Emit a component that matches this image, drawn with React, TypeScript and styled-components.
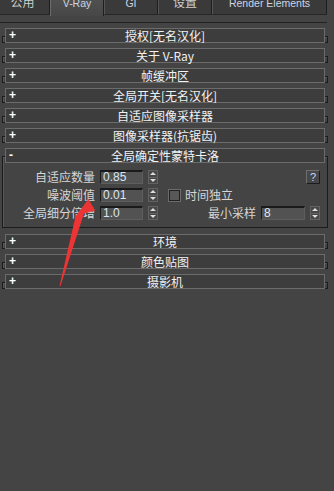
import React from 'react'
import styled, { createGlobalStyle } from 'styled-components'

const GlobalStyle = createGlobalStyle`
  html, body {
    margin: 0;
    padding: 0;
    background: #444444;
  }
  body {
    font-family: "Noto Sans CJK SC", "Liberation Sans", sans-serif;
  }
`

const Page = styled.div`
  position: relative;
  width: 334px;
  height: 491px;
  overflow: hidden;
  background: #444444;
`

const TabBar = styled.div`
  display: flex;
  align-items: flex-start;
  height: 16px;
  width: 328px;
`

const Tab = styled.div<{ $w: number; $active?: boolean; $first?: boolean }>`
  box-sizing: border-box;
  flex: none;
  width: ${p => p.$w}px;
  margin-left: ${p => (p.$first ? -5 : 0)}px;
  height: ${p => (p.$active ? 16 : 15)}px;
  display: flex;
  justify-content: center;
  overflow: hidden;
  background: ${p => (p.$active ? 'linear-gradient(#505050, #474747)' : '#3a3a3a')};
  border-left: 1px solid ${p => (p.$active ? '#6c6c6c' : '#555555')};
  border-right: 1px solid #1e1e1e;
  border-bottom: ${p => (p.$active ? 'none' : '1px solid #262626')};
  font-family: "Liberation Sans", "Noto Sans CJK SC", sans-serif;
  line-height: 6px;
`

const TabLabel = styled.span<{ $latin?: boolean }>`
  font-size: ${p => (p.$latin ? '10.5px' : '12px')};
  color: ${p => (p.$latin ? '#cdd6e4' : '#cfcfcf')};
`

const Panel = styled.div`
  margin-top: 6px;
  width: 327px;
  border-top: 1px solid #222222;
  padding-top: 5px;
  display: flex;
  flex-direction: column;
`

const RolloutBox = styled.div<{ $gap: number }>`
  margin-left: 2px;
  width: 326px;
  margin-bottom: ${p => p.$gap}px;
`

const Header = styled.div`
  position: relative;
  z-index: 1;
  box-sizing: border-box;
  margin: 0 3px;
  height: 15px;
  border: 1px solid #6b6b6b;
  background: #3d3d3d;
  display: grid;
  grid-template-columns: 14px 1fr 14px;
  align-items: center;
  color: #f2f2f2;
  font-size: 12px;
  line-height: 13px;
`

const Sign = styled.span`
  padding-left: 3px;
  font-family: "Liberation Sans", sans-serif;
  font-weight: bold;
  font-size: 12px;
  color: #ffffff;
`

const Title = styled.span`
  text-align: center;
  white-space: nowrap;
`

const Frame = styled.div<{ $open?: boolean }>`
  box-sizing: border-box;
  margin-top: -7px;
  height: ${p => (p.$open ? 'auto' : '7px')};
  border: 1px solid #1b1b1b;
  box-shadow: inset 1px 1px 0 #575757;
  padding: ${p => (p.$open ? '13px 7px 7px 0' : '0')};
  display: flex;
  flex-direction: column;
  gap: 4px;
`

const Row = styled.div`
  display: grid;
  grid-template-columns: 92px 43px 10px 1fr;
  column-gap: 5px;
  height: 14px;
  align-items: center;
`

const Label = styled.span`
  text-align: right;
  color: #d6d6d6;
  font-size: 12px;
  line-height: 14px;
  white-space: nowrap;
`

const Field = styled.div<{ $w?: number }>`
  box-sizing: border-box;
  width: ${p => (p.$w ? `${p.$w}px` : 'auto')};
  height: 14px;
  background: #525252;
  border: 1px solid #1a1a1a;
  border-top-width: 2px;
  border-right-color: #5e5e5e;
  border-bottom-color: #5e5e5e;
  padding-left: 2px;
  color: #dbe6f2;
  font-family: "Liberation Sans", sans-serif;
  font-size: 12px;
  line-height: 10px;
`

const Spinner = styled.div`
  box-sizing: border-box;
  width: 10px;
  height: 14px;
  border: 1px solid #626262;
  background: #474747;
  display: flex;
  flex-direction: column;
`

const SpinHalf = styled.div<{ $down?: boolean }>`
  flex: 1;
  display: flex;
  align-items: center;
  justify-content: center;
  border-top: ${p => (p.$down ? '1px solid #626262' : 'none')};
  &::after {
    content: "";
    width: 0;
    height: 0;
    border-left: 3px solid transparent;
    border-right: 3px solid transparent;
    ${p => (p.$down ? 'border-top: 3px solid #dcdcdc;' : 'border-bottom: 3px solid #dcdcdc;')}
  }
`

const Rest = styled.div<{ $end?: boolean }>`
  display: flex;
  align-items: center;
  justify-content: ${p => (p.$end ? 'flex-end' : 'flex-start')};
  gap: 5px;
`

const HelpButton = styled.div`
  box-sizing: border-box;
  width: 14px;
  height: 14px;
  background: #474747;
  border: 1px solid #6e6e6e;
  border-right-color: #1c1c1c;
  border-bottom-color: #1c1c1c;
  color: #c9d6f4;
  font-family: "Liberation Sans", sans-serif;
  font-size: 11px;
  line-height: 12px;
  text-align: center;
`

const Check = styled.div`
  box-sizing: border-box;
  margin-left: 6px;
  width: 11px;
  height: 11px;
  background: #585858;
  border: 1px solid #222222;
  box-shadow: 0 0 0 1px #6c6c6c;
`

const Arrow = styled.svg`
  position: absolute;
  z-index: 2;
  left: 0;
  top: 0;
  pointer-events: none;
`

const Spin = () => (
  <Spinner>
    <SpinHalf />
    <SpinHalf $down />
  </Spinner>
)

const Rollout = ({ title, open, gap = 5, children }: { title: string; open?: boolean; gap?: number; children?: React.ReactNode }) => (
  <RolloutBox $gap={gap}>
    <Header>
      <Sign>{open ? '-' : '+'}</Sign>
      <Title>{title}</Title>
    </Header>
    <Frame $open={open}>{children}</Frame>
  </RolloutBox>
)

const tabs = [
  { label: '公用', w: 55, first: true },
  { label: 'V-Ray', w: 54, active: true, latin: true },
  { label: 'GI', w: 54, latin: true },
  { label: '设置', w: 54 },
  { label: 'Render Elements', w: 115, latin: true },
]

const before = ['授权[无名汉化]', '关于 V-Ray', '帧缓冲区', '全局开关[无名汉化]', '自适应图像采样器', '图像采样器(抗锯齿)']
const after = ['环境', '颜色贴图', '摄影机']

export default function App() {
  return (
    <Page>
      <GlobalStyle />
      <TabBar>
        {tabs.map(t => (
          <Tab key={t.label} $w={t.w} $active={t.active} $first={t.first}>
            <TabLabel $latin={t.latin}>{t.label}</TabLabel>
          </Tab>
        ))}
      </TabBar>
      <Panel>
        {before.map(t => (
          <Rollout key={t} title={t} />
        ))}
        <Rollout title="全局确定性蒙特卡洛" open gap={6}>
          <Row>
            <Label>自适应数量</Label>
            <Field>0.85</Field>
            <Spin />
            <Rest $end>
              <HelpButton>?</HelpButton>
            </Rest>
          </Row>
          <Row>
            <Label>噪波阈值</Label>
            <Field>0.01</Field>
            <Spin />
            <Rest>
              <Check />
              <Label>时间独立</Label>
            </Rest>
          </Row>
          <Row>
            <Label>全局细分倍增</Label>
            <Field>1.0</Field>
            <Spin />
            <Rest $end>
              <Label>最小采样</Label>
              <Field $w={44}>8</Field>
              <Spin />
            </Rest>
          </Row>
        </Rollout>
        {after.map(t => (
          <Rollout key={t} title={t} />
        ))}
      </Panel>
      <Arrow width="334" height="491" viewBox="0 0 334 491">
        <polygon points="88.5,199 95,210.5 84,213.5 60.5,286 59.5,286 75.5,216.5" fill="#ec3434" />
      </Arrow>
    </Page>
  )
}
